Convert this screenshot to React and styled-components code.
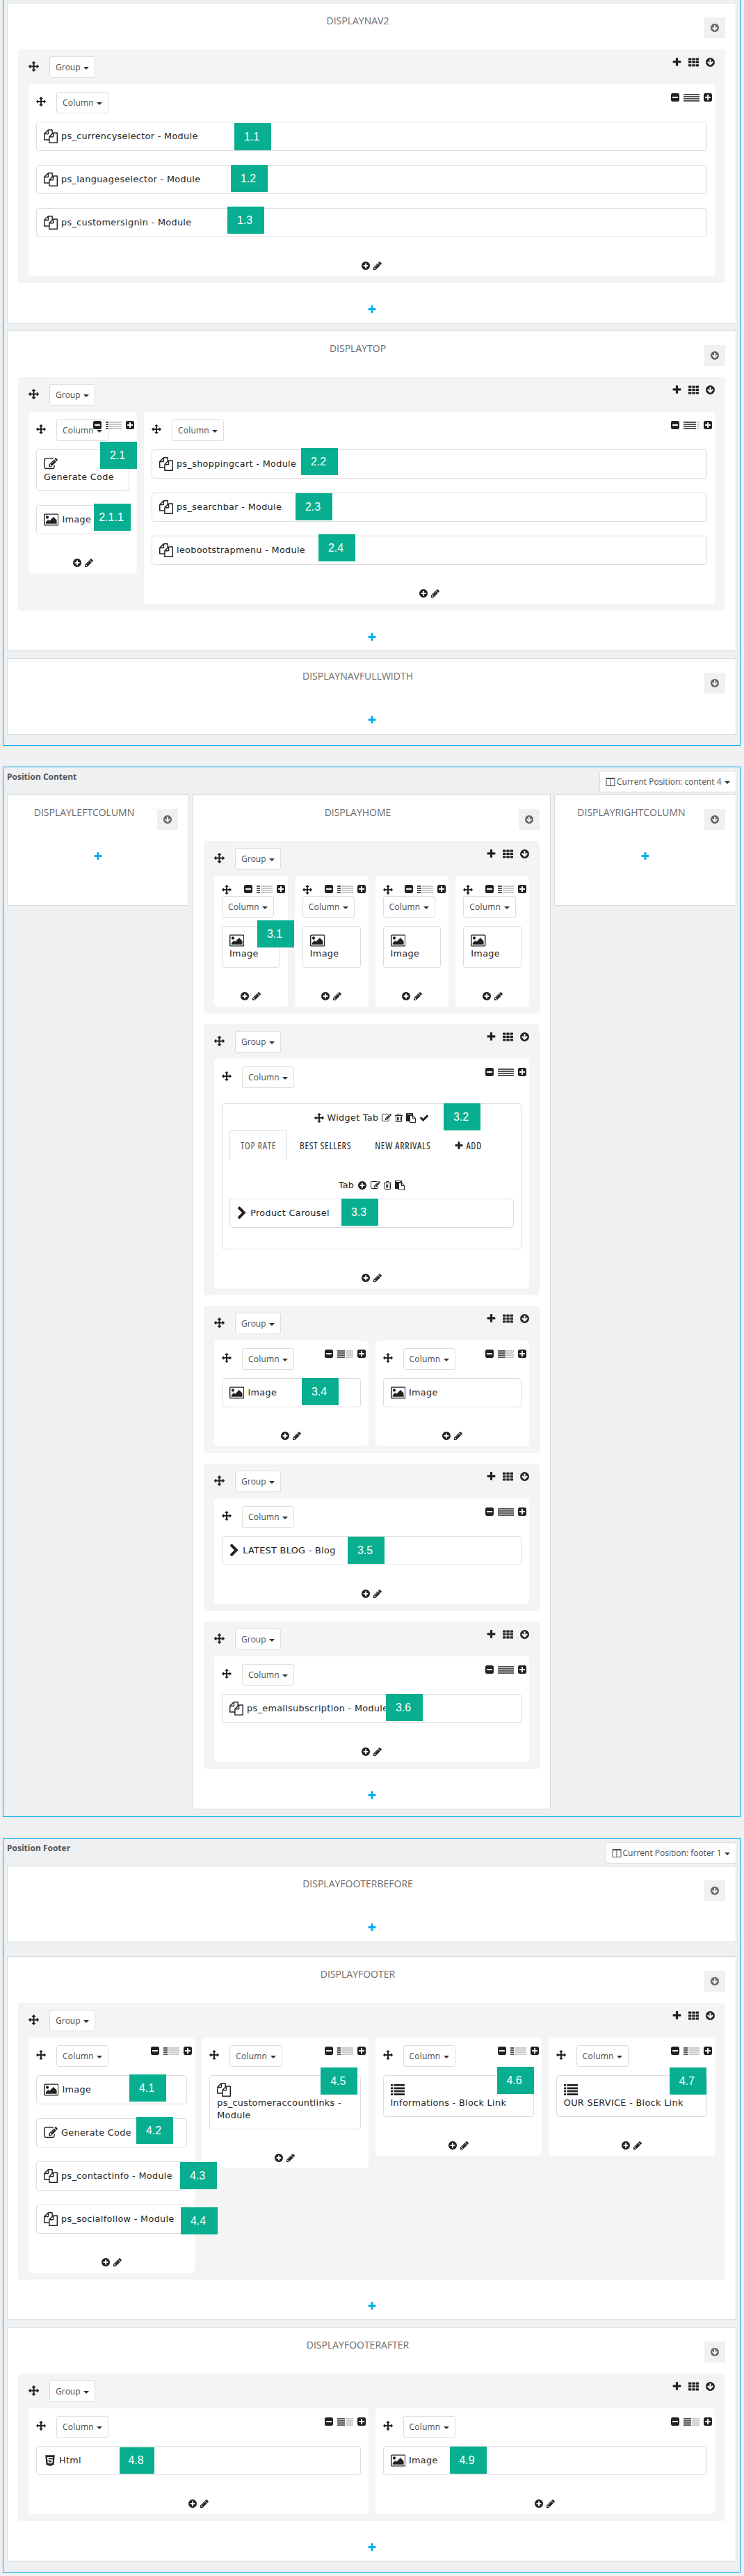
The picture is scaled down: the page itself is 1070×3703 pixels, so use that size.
import React from "react";
import styled, { createGlobalStyle, css } from "styled-components";
import { FaHtml5 } from "react-icons/fa";

const sans = '"Open Sans", "Noto Sans", sans-serif';
const wide = '"DejaVu Sans", Verdana, sans-serif';

const GlobalStyle = createGlobalStyle`
  *, *::before, *::after { box-sizing: border-box; }
  body {
    margin: 0;
    background: #eff0f2;
    color: #222;
    font-family: ${sans};
  }
`;

/* ---------- icons ---------- */

const disc =
  "q0 209-103 385.5t-279.5 279.5-385.5 103-385.5-103-279.5-279.5-103-385.5 103-385.5 279.5-279.5 385.5-103 385.5 103 279.5 279.5 103 385.5z";
const square =
  "v960q0 119-84.5 203.5t-203.5 84.5h-960q-119 0-203.5-84.5t-84.5-203.5v-960q0-119 84.5-203.5t203.5-84.5h960q119 0 203.5 84.5t84.5 203.5z";

const paths = {
  move: "M1792 896q0 26-19 45l-256 256q-19 19-45 19t-45-19-19-45v-128h-384v384h128q26 0 45 19t19 45-19 45l-256 256q-19 19-45 19t-45-19l-256-256q-19-19-19-45t19-45 45-19h128v-384h-384v128q0 26-19 45t-45 19-45-19l-256-256q-19-19-19-45t19-45l256-256q19-19 45-19t45 19 19 45v128h384v-384h-128q-26 0-45-19t-19-45 19-45l256-256q19-19 45-19t45 19l256 256q19 19 19 45t-19 45-45 19h-128v384h384v-128q0-26 19-45t45-19 45 19l256 256q19 19 19 45z",
  plus: "M1600 736v192q0 40-28 68t-68 28h-416v416q0 40-28 68t-68 28h-192q-40 0-68-28t-28-68v-416h-416q-40 0-68-28t-28-68v-192q0-40 28-68t68-28h416v-416q0-40 28-68t68-28h192q40 0 68 28t28 68v416h416q40 0 68 28t28 68z",
  plusCircle:
    "M1344 960v-128q0-26-19-45t-45-19h-256v-256q0-26-19-45t-45-19h-128q-26 0-45 19t-19 45v256h-256q-26 0-45 19t-19 45v128q0 26 19 45t45 19h256v256q0 26 19 45t45 19h128q26 0 45-19t19-45v-256h256q26 0 45-19t19-45zm320-64" +
    disc,
  arrowDown:
    "M1412 897q0-27-18-45l-91-91q-18-18-45-18t-45 18l-189 189v-502q0-26-19-45t-45-19h-128q-26 0-45 19t-19 45v502l-189-189q-19-19-45-19t-45 19l-91 91q-18 18-18 45t18 45l362 362 91 91q18 18 45 18t45-18l91-91 362-362q18-18 18-45zm252-1" +
    disc,
  pencil:
    "M491 1536l91-91-235-235-91 91v107h128v128h107zm523-928q0-22-22-22-10 0-17 7l-542 542q-7 7-7 17 0 22 22 22 10 0 17-7l542-542q7-7 7-17zm-54-192l416 416-832 832h-416v-416zm683 96q0 53-37 90l-166 166-416-416 166-165q36-38 90-38 53 0 91 38l235 234q37 39 37 91z",
  minusSquare:
    "M1408 960v-128q0-26-19-45t-45-19h-896q-26 0-45 19t-19 45v128q0 26 19 45t45 19h896q26 0 45-19t19-45zm256-544" +
    square,
  plusSquare:
    "M1408 960v-128q0-26-19-45t-45-19h-320v-320q0-26-19-45t-45-19h-128q-26 0-45 19t-19 45v320h-320q-26 0-45 19t-19 45v128q0 26 19 45t45 19h320v320q0 26 19 45t45 19h128q26 0 45-19t19-45v-320h320q26 0 45-19t19-45zm256-544" +
    square,
  files:
    "M1696 384q40 0 68 28t28 68v1216q0 40-28 68t-68 28h-960q-40 0-68-28t-28-68v-288h-544q-40 0-68-28t-28-68v-672q0-40 20-88t48-76l408-408q28-28 76-48t88-20h416q40 0 68 28t28 68v328q68-40 128-40h416zm-544 213l-299 299h299v-299zm-640-384l-299 299h299v-299zm196 647l316-316v-416h-384v416q0 40-28 68t-68 28h-416v640h512v-256q0-40 20-88t48-76zm956 804v-1152h-384v416q0 40-28 68t-68 28h-416v640h896z",
  image:
    "M576 576q0 80-56 136t-136 56-136-56-56-136 56-136 136-56 136 56 56 136zm1024 384v448h-1408v-192l320-320 160 160 512-512zm96-704h-1600q-13 0-22.5 9.5t-9.5 22.5v1216q0 13 9.5 22.5t22.5 9.5h1600q13 0 22.5-9.5t9.5-22.5v-1216q0-13-9.5-22.5t-22.5-9.5zm160 32v1216q0 66-47 113t-113 47h-1600q-66 0-113-47t-47-113v-1216q0-66 47-113t113-47h1600q66 0 113 47t47 113z",
  edit: "M888 1184l116-116-152-152-116 116v56h96v96h56zm440-720q-16-16-33 1l-350 350q-17 17-1 33t33-1l350-350q17-17 1-33zm80 594v190q0 119-84.5 203.5t-203.5 84.5h-832q-119 0-203.5-84.5t-84.5-203.5v-832q0-119 84.5-203.5t203.5-84.5h832q63 0 117 25 15 7 18 23 3 17-9 29l-49 49q-14 14-32 8-23-6-45-6h-832q-66 0-113 47t-47 113v832q0 66 47 113t113 47h832q66 0 113-47t47-113v-126q0-13 9-22l64-64q15-15 35-7t20 29zm-96-738l288 288-672 672h-288v-288zm444 132l-92 92-288-288 92-92q28-28 68-28t68 28l152 152q28 28 28 68t-28 68z",
  trash:
    "M704 736v576q0 14-9 23t-23 9h-64q-14 0-23-9t-9-23v-576q0-14 9-23t23-9h64q14 0 23 9t9 23zm256 0v576q0 14-9 23t-23 9h-64q-14 0-23-9t-9-23v-576q0-14 9-23t23-9h64q14 0 23 9t9 23zm256 0v576q0 14-9 23t-23 9h-64q-14 0-23-9t-9-23v-576q0-14 9-23t23-9h64q14 0 23 9t9 23zm128 724v-948h-896v948q0 22 7 40.5t14.5 27 10.5 8.5h832q3 0 10.5-8.5t14.5-27 7-40.5zm-672-1076h448l-48-117q-7-9-17-11h-317q-10 2-17 11zm928 32v64q0 14-9 23t-23 9h-96v948q0 83-47 143.5t-113 60.5h-832q-66 0-113-58.5t-47-141.5v-952h-96q-14 0-23-9t-9-23v-64q0-14 9-23t23-9h309l70-167q15-37 54-63t79-26h320q40 0 79 26t54 63l70 167h309q14 0 23 9t9 23z",
  paste:
    "M768 1664h896v-640h-416q-40 0-68-28t-28-68v-416h-384v1152zm256-1440v-64q0-13-9.5-22.5t-22.5-9.5h-704q-13 0-22.5 9.5t-9.5 22.5v64q0 13 9.5 22.5t22.5 9.5h704q13 0 22.5-9.5t9.5-22.5zm256 672h299l-299-299v299zm512 128v672q0 40-28 68t-68 28h-960q-40 0-68-28t-28-68v-160h-544q-40 0-68-28t-28-68v-1344q0-40 28-68t68-28h1088q40 0 68 28t28 68v328q21 13 36 28l408 408q28 28 48 76t20 88z",
  check:
    "M1671 566q0 40-28 68l-724 724-136 136q-28 28-68 28t-68-28l-136-136-362-362q-28-28-28-68t28-68l136-136q28-28 68-28t68 28l294 295 656-657q28-28 68-28t68 28l136 136q28 28 28 68z",
  chevron:
    "M1363 877l-742 742q-19 19-45 19t-45-19l-166-166q-19-19-19-45t19-45l531-531-531-531q-19-19-19-45t19-45l166-166q19-19 45-19t45 19l742 742q19 19 19 45t-19 45z",
  columns:
    "M224 1536h608v-1152h-640v1120q0 13 9.5 22.5t22.5 9.5zm1376-32v-1120h-640v1152h608q13 0 22.5-9.5t9.5-22.5zm128-1216v1216q0 66-47 113t-113 47h-1344q-66 0-113-47t-47-113v-1216q0-66 47-113t113-47h1344q66 0 113 47t47 113z",
};

/* visible horizontal span of a glyph on the 1792-unit em, where it isn't the full em */
const spans = { image: [-64, 1920], chevron: [270, 1180], trash: [192, 1408] };

const Svg = styled.svg`
  display: block;
  flex: none;
  fill: currentColor;
`;

function Icon({ name, size = 14 }) {
  const [x, w] = spans[name] || [0, 1792];
  return (
    <Svg width={(size * w) / 1792} height={size} viewBox={`${x} 0 ${w} 1792`}>
      <path d={paths[name]} />
    </Svg>
  );
}

function GridIcon() {
  const cells = [];
  for (let r = 0; r < 3; r++)
    for (let c = 0; c < 3; c++)
      cells.push(<rect key={`${r}${c}`} x={c * 5.3} y={r * 4.4 + 1.4} width="4.4" height="3.3" rx="0.7" />);
  return <Svg width="15" height="15" viewBox="0 0 15 15">{cells}</Svg>;
}

function ListIcon() {
  return (
    <Svg width="20" height="20" viewBox="0 0 20 20">
      {[2, 6.4, 10.8, 15.2].map((y) => (
        <React.Fragment key={y}>
          <rect x="0" y={y} width="3" height="2.8" rx="0.3" />
          <rect x="4.3" y={y} width="15.7" height="2.8" rx="0.3" />
        </React.Fragment>
      ))}
    </Svg>
  );
}

/* ---------- page frame ---------- */

const Page = styled.main`
  width: 1070px;
  height: 3703px;
  overflow: hidden;
  padding: 0 5px 0 4px;
  display: flex;
  flex-direction: column;
  gap: 30px;
`;

const Frame = styled.section`
  border: 1px solid #00aff0;
  padding: 5px;
  box-shadow: 0 0 3px rgba(0, 0, 0, 0.08);
  ${(p) => p.$first && css`border-top: 0; padding-top: 4px;`}
`;

const FrameHeader = styled.header`
  display: flex;
  justify-content: space-between;
  align-items: flex-start;
  height: 34px;
`;

const FrameTitle = styled.h3`
  margin: 0;
  font-size: 12px;
  line-height: 17px;
  font-weight: 700;
  color: #555;
`;

const HookStack = styled.div`
  display: flex;
  flex-direction: column;
  gap: 10px;
  padding-bottom: 10px;
`;

const HookRow = styled.div`
  display: grid;
  grid-template-columns: 262px 1fr 262px;
  gap: 5px;
  align-items: start;
  padding-bottom: 5px;
`;

/* ---------- hook panel ---------- */

const HookBox = styled.section`
  background: #fff;
  border: 1px solid #d8dbdf;
  padding: 0 15px;
  min-height: ${(p) => p.$minHeight || 0}px;
  margin-top: ${(p) => (p.$spaced ? 10 : 0)}px;
`;

const HookHeader = styled.header`
  display: flex;
  align-items: flex-start;
  height: 66px;
`;

const HookTitle = styled.h4`
  flex: 1;
  margin: 15px 10px 0 0;
  text-align: center;
  font-size: 14px;
  line-height: 20px;
  font-weight: 400;
  color: #6a6a6a;
  white-space: nowrap;
`;

const HookButton = styled.button`
  width: 30px;
  height: 30px;
  margin: 20px 0 0;
  padding: 0;
  border: 0;
  background: #f0f0f0;
  color: #666;
  display: grid;
  place-items: center;
`;

const Groups = styled.div`
  display: flex;
  flex-direction: column;
  gap: 15px;
`;

const HookFooter = styled.footer`
  display: flex;
  justify-content: center;
  color: #00aff0;
  padding: ${(p) => (p.$empty ? "15px 0 13px" : "31px 0 12px")};
`;

function Hook({ title, minHeight, spaced, children }) {
  return (
    <HookBox $minHeight={minHeight} $spaced={spaced}>
      <HookHeader>
        <HookTitle>{title}</HookTitle>
        <HookButton><Icon name="arrowDown" /></HookButton>
      </HookHeader>
      {children && <Groups>{children}</Groups>}
      <HookFooter $empty={!children}><Icon name="plus" /></HookFooter>
    </HookBox>
  );
}

/* ---------- drop-down button ---------- */

const Dropdown = styled.button`
  display: inline-flex;
  align-items: center;
  flex: none;
  height: 31px;
  padding: 0 8px;
  border: 1px solid #ddd;
  border-radius: 3px;
  background: #fff;
  color: #4c4c4c;
  font: 400 12px/17px ${sans};
  letter-spacing: ${(p) => p.$tracking || 0}px;
  white-space: nowrap;
`;

const Caret = styled.i`
  margin: 2px 0 0 4.5px;
  border: 4px solid transparent;
  border-top-color: #333;
  border-bottom: 0;
`;

const PositionLabel = styled.span`
  margin-left: 2px;
`;

/* ---------- group ---------- */

const GroupBox = styled.div`
  background: #f4f4f4;
  border-radius: 4px;
  padding: 10px 15px;
`;

const GroupHeader = styled.div`
  display: flex;
  align-items: flex-start;
  gap: 15px;
  height: 40px;
`;

const GroupHandle = styled.span`
  padding-top: 6.5px;
`;

const GroupTools = styled.div`
  display: flex;
  gap: 9px;
  margin: 1px -1px 0 auto;
`;

const Columns = styled.div`
  display: grid;
  grid-template-columns: ${(p) => p.$template};
  gap: 10px;
  align-items: start;
`;

function Group({ template = "minmax(0, 1fr)", children }) {
  return (
    <GroupBox>
      <GroupHeader>
        <GroupHandle><Icon name="move" size={15} /></GroupHandle>
        <Dropdown>Group<Caret /></Dropdown>
        <GroupTools>
          <Icon name="plus" size={15} />
          <GridIcon />
          <Icon name="arrowDown" size={15} />
        </GroupTools>
      </GroupHeader>
      <Columns $template={template}>{children}</Columns>
    </GroupBox>
  );
}

/* ---------- column ---------- */

const ColumnBox = styled.div`
  background: #fff;
  border-radius: 5px;
  padding: 11px 11px 0;
  min-width: 0;
`;

const ColumnHeader = styled.div`
  display: flex;
  align-items: flex-start;
  margin-right: -8px;
  height: ${(p) => (p.$stacked ? 61 : 43)}px;
`;

const ColumnLead = styled.div`
  display: flex;
  flex: 0 1 auto;
  min-width: 0;
  gap: 15px;
  align-items: flex-start;
  ${(p) => p.$stacked && css`
    width: 14px;
    flex-direction: column;
    gap: 2px;
  `}
`;

const ColumnHandle = styled.span`
  padding-top: ${(p) => (p.$stacked ? 2 : 7)}px;
`;

const ColumnTools = styled.div`
  display: flex;
  flex: none;
  gap: 5px;
  margin: 1px 0 0 auto;
  z-index: 1;
`;

const Meter = styled.span`
  display: grid;
  grid-template-columns: ${(p) => (p.$span === 12 ? "1fr" : `${p.$span}fr ${12 - p.$span}fr`)};
  gap: 1px;
  width: 23px;
  height: 11px;
  margin-top: 2px;
`;

const Bars = styled.span`
  background: repeating-linear-gradient(${(p) => (p.$on ? "#555" : "#c8c8c8")} 0 2px, transparent 2px 3px);
`;

const Widgets = styled.div`
  display: flex;
  flex-direction: column;
  gap: 20px;
`;

const ColumnFooter = styled.div`
  display: flex;
  justify-content: center;
  gap: 3px;
  padding: 34px 0 8px;
`;

function Column({ span, stacked, children }) {
  return (
    <ColumnBox>
      <ColumnHeader $stacked={stacked}>
        <ColumnLead $stacked={stacked}>
          <ColumnHandle $stacked={stacked}><Icon name="move" /></ColumnHandle>
          <Dropdown $tracking={0.2}>Column<Caret /></Dropdown>
        </ColumnLead>
        <ColumnTools>
          <Icon name="minusSquare" />
          <Meter $span={span}>
            <Bars $on />
            {span < 12 && <Bars />}
          </Meter>
          <Icon name="plusSquare" />
        </ColumnTools>
      </ColumnHeader>
      <Widgets>{children}</Widgets>
      <ColumnFooter><Icon name="plusCircle" /><Icon name="pencil" /></ColumnFooter>
    </ColumnBox>
  );
}

/* ---------- widget ---------- */

const WidgetBox = styled.div`
  position: relative;
  display: flex;
  flex-direction: ${(p) => (p.$wrapped ? "column" : "row")};
  align-items: ${(p) => (p.$wrapped ? "flex-start" : "center")};
  border: 1px solid #ddd;
  border-radius: 4px;
  background: #fff;
  padding: 10px;
  min-height: 42px;
`;

const WidgetIcon = styled.span`
  display: flex;
  align-items: center;
  height: 20px;
`;

const WidgetLabel = styled.span`
  font: 400 12.8px/18px ${wide};
  letter-spacing: 0.33px;
  color: #222;
  margin-left: ${(p) => (p.$wrapped ? 0 : p.$gap)}px;
  white-space: ${(p) => (p.$wrapped ? "normal" : "nowrap")};
`;

const Badge = styled.span`
  position: absolute;
  z-index: 2;
  left: ${(p) => p.$x - 1}px;
  top: ${(p) => p.$y - 1}px;
  width: ${(p) => p.$w || 53}px;
  height: ${(p) => p.$h || 39}px;
  padding-right: 3px;
  background: #08ae90;
  color: #fff;
  font: 400 16px/${(p) => p.$h || 39}px "Liberation Sans", Arial, sans-serif;
  text-align: center;
`;

const glyphs = {
  files: [<Icon name="files" size={20} />, 5],
  image: [<Icon name="image" size={20} />, 5],
  edit: [<Icon name="edit" size={20} />, 5],
  chevron: [<Icon name="chevron" size={20} />, 6],
  list: [<ListIcon />, 5],
  html: [<FaHtml5 size={18} />, 4],
};

function Widget({ icon, label, badge, wrapped }) {
  const [glyph, gap] = glyphs[icon];
  return (
    <WidgetBox $wrapped={wrapped}>
      <WidgetIcon>{glyph}</WidgetIcon>
      <WidgetLabel $wrapped={wrapped} $gap={gap}>{label}</WidgetLabel>
      {badge && (
        <Badge $x={badge[1]} $y={badge[2]} $w={badge[3]} $h={badge[4]}>{badge[0]}</Badge>
      )}
    </WidgetBox>
  );
}

/* ---------- tab widget ---------- */

const TabWidgetBox = styled.div`
  position: relative;
  margin-top: 10px;
  height: 210px;
  border: 1px solid #ddd;
  border-radius: 4px;
  padding: 10px;
`;

const ToolLine = styled.div`
  display: flex;
  justify-content: center;
  align-items: center;
  gap: 5px;
  height: 20px;
  font: 400 12.8px/20px ${wide};
  letter-spacing: 0.3px;
`;

const TabBar = styled.div`
  display: flex;
  gap: 2px;
  margin-top: 8px;
  height: 43px;
`;

const Tab = styled.span`
  display: flex;
  align-items: center;
  gap: 3px;
  padding: 0 15px;
  border: 1px solid ${(p) => (p.$active ? "#ddd" : "transparent")};
  border-bottom: 0;
  border-radius: 3px 3px 0 0;
  color: ${(p) => (p.$active ? "#555" : "#222")};
  font: 400 14px/20px ${sans};
  font-stretch: 75%;
  letter-spacing: 0.75px;
  white-space: nowrap;
`;

const TabPane = styled.div`
  padding-top: 26px;
  display: flex;
  flex-direction: column;
  gap: 9px;
`;

function TabWidget() {
  return (
    <TabWidgetBox>
      <ToolLine>
        <Icon name="move" />
        Widget Tab
        <Icon name="edit" />
        <Icon name="trash" />
        <Icon name="paste" />
        <Icon name="check" />
      </ToolLine>
      <TabBar>
        <Tab $active>TOP RATE</Tab>
        <Tab>BEST SELLERS</Tab>
        <Tab>NEW ARRIVALS</Tab>
        <Tab><Icon name="plus" size={14} />ADD</Tab>
      </TabBar>
      <TabPane>
        <ToolLine>
          Tab
          <Icon name="plusCircle" />
          <Icon name="edit" />
          <Icon name="trash" />
          <Icon name="paste" />
        </ToolLine>
        <Widget icon="chevron" label="Product Carousel" badge={["3.3", 161, 0]} />
      </TabPane>
      <Badge $x={319} $y={0}>3.2</Badge>
    </TabWidgetBox>
  );
}

function PositionFrame({ title, current, children }) {
  return (
    <Frame>
      <FrameHeader>
        <FrameTitle>{title}</FrameTitle>
        <Dropdown>
          <Icon name="columns" />
          <PositionLabel>Current Position: {current}</PositionLabel>
          <Caret />
        </Dropdown>
      </FrameHeader>
      {children}
    </Frame>
  );
}

const quarter = "repeat(4, minmax(0, 1fr))";
const half = "repeat(2, minmax(0, 1fr))";

export default function App() {
  return (
    <Page>
      <GlobalStyle />
      <Frame $first>
        <HookStack>
          <Hook title="DISPLAYNAV2">
            <Group>
              <Column span={12}>
                <Widget icon="files" label="ps_currencyselector - Module" badge={["1.1", 285, 2]} />
                <Widget icon="files" label="ps_languageselector - Module" badge={["1.2", 280, 0]} />
                <Widget icon="files" label="ps_customersignin - Module" badge={["1.3", 275, -2]} />
              </Column>
            </Group>
          </Hook>
          <Hook title="DISPLAYTOP">
            <Group template="156px minmax(0, 1fr)">
              <Column span={2}>
                <Widget wrapped icon="edit" label="Generate Code" badge={["2.1", 92, -11]} />
                <Widget icon="image" label="Image" badge={["2.1.1", 83, -2]} />
              </Column>
              <Column span={10}>
                <Widget icon="files" label="ps_shoppingcart - Module" badge={["2.2", 215, -2]} />
                <Widget icon="files" label="ps_searchbar - Module" badge={["2.3", 207, 1]} />
                <Widget icon="files" label="leobootstrapmenu - Module" badge={["2.4", 240, -2]} />
              </Column>
            </Group>
          </Hook>
          <Hook title="DISPLAYNAVFULLWIDTH" />
        </HookStack>
      </Frame>

      <PositionFrame title="Position Content" current="content 4">
        <HookRow>
          <Hook title="DISPLAYLEFTCOLUMN" minHeight={160} />
          <Hook title="DISPLAYHOME">
            <Group template={quarter}>
              <Column span={3} stacked>
                <Widget wrapped icon="image" label="Image" badge={["3.1", 51, -8]} />
              </Column>
              <Column span={3} stacked><Widget wrapped icon="image" label="Image" /></Column>
              <Column span={3} stacked><Widget wrapped icon="image" label="Image" /></Column>
              <Column span={3} stacked><Widget wrapped icon="image" label="Image" /></Column>
            </Group>
            <Group>
              <Column span={12}><TabWidget /></Column>
            </Group>
            <Group template={half}>
              <Column span={6}>
                <Widget icon="image" label="Image" badge={["3.4", 115, 0]} />
              </Column>
              <Column span={6}><Widget icon="image" label="Image" /></Column>
            </Group>
            <Group>
              <Column span={12}>
                <Widget icon="chevron" label="LATEST BLOG - Blog" badge={["3.5", 181, 1]} />
              </Column>
            </Group>
            <Group>
              <Column span={12}>
                <Widget icon="files" label="ps_emailsubscription - Module" badge={["3.6", 236, 0]} />
              </Column>
            </Group>
          </Hook>
          <Hook title="DISPLAYRIGHTCOLUMN" minHeight={160} />
        </HookRow>
      </PositionFrame>

      <PositionFrame title="Position Footer" current="footer 1">
        <HookStack>
          <Hook title="DISPLAYFOOTERBEFORE" />
          <Hook title="DISPLAYFOOTER" spaced>
            <Group template={quarter}>
              <Column span={3}>
                <Widget icon="image" label="Image" badge={["4.1", 134, -1]} />
                <Widget icon="edit" label="Generate Code" badge={["4.2", 144, -2]} />
                <Widget icon="files" label="ps_contactinfo - Module" badge={["4.3", 207, 1]} />
                <Widget icon="files" label="ps_socialfollow - Module" badge={["4.4", 208, 4]} />
              </Column>
              <Column span={3}>
                <Widget wrapped icon="files" label="ps_customeraccountlinks - Module" badge={["4.5", 160, -11]} />
              </Column>
              <Column span={3}>
                <Widget wrapped icon="list" label="Informations - Block Link" badge={["4.6", 164, -12]} />
              </Column>
              <Column span={3}>
                <Widget wrapped icon="list" label="OUR SERVICE - Block Link" badge={["4.7", 163, -11]} />
              </Column>
            </Group>
          </Hook>
          <Hook title="DISPLAYFOOTERAFTER">
            <Group template={half}>
              <Column span={6}>
                <Widget icon="html" label="Html" badge={["4.8", 120, 2, 50, 38]} />
              </Column>
              <Column span={6}>
                <Widget icon="image" label="Image" badge={["4.9", 96, 1]} />
              </Column>
            </Group>
          </Hook>
        </HookStack>
      </PositionFrame>
    </Page>
  );
}
